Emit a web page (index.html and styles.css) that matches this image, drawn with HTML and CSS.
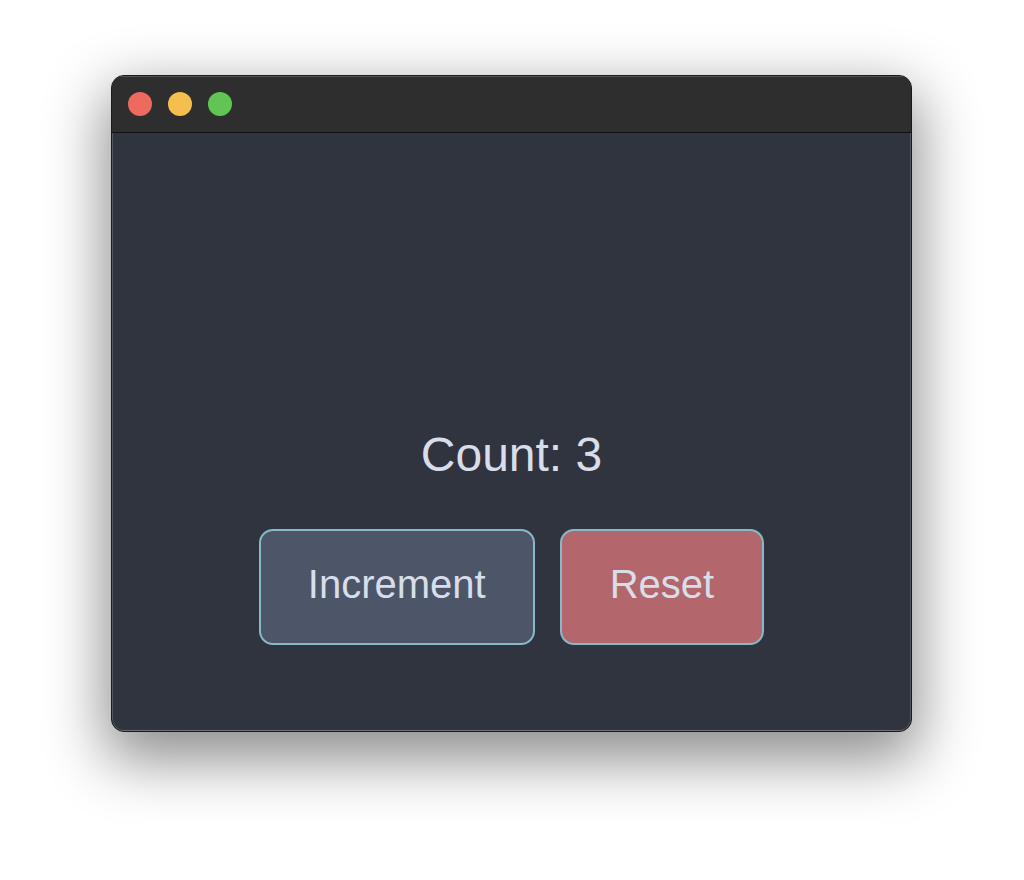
FILE: index.html
```html
<!DOCTYPE html>
<html>
<head>
<meta charset="utf-8">
<link rel="stylesheet" href="styles.css">
</head>
<body>
<div class="window">
  <div class="titlebar">
    <span class="light red"></span>
    <span class="light yellow"></span>
    <span class="light green"></span>
  </div>
  <div class="content">
    <div class="count">Count: 3</div>
    <div class="buttons">
      <button class="btn increment">Increment</button>
      <button class="btn reset">Reset</button>
    </div>
  </div>
</div>
</body>
</html>
```

FILE: styles.css
```css
html, body {
  margin: 0;
  padding: 0;
  background: #ffffff;
}
body {
  width: 1024px;
  height: 880px;
  overflow: hidden;
  font-family: "Liberation Sans", Arial, sans-serif;
}
.window {
  margin: 75px 0 0 111px;
  width: 801px;
  height: 657px;
  box-sizing: border-box;
  border: 1px solid #1a1a1a;
  border-radius: 13px;
  overflow: hidden;
  background: #2f343f;
  box-shadow: inset 0 0 0 1px rgba(255,255,255,0.18), 0 22px 60px 6px rgba(0,0,0,0.45);
  display: flex;
  flex-direction: column;
}
.titlebar {
  height: 56px;
  flex: none;
  background: #2e2e2e;
  border-bottom: 1px solid #111;
  display: flex;
  align-items: center;
  gap: 16px;
  padding-left: 16px;
  box-shadow: inset 0 1px 0 rgba(255,255,255,0.18);
}
.light {
  width: 24px;
  height: 24px;
  border-radius: 50%;
  display: block;
}
.red { background: #ed6a5e; }
.yellow { background: #f5bf4f; }
.green { background: #61c554; }
.content {
  flex: 1;
  display: flex;
  flex-direction: column;
  align-items: center;
  padding-top: 295px;
  box-shadow: inset 0 -1px 0 rgba(255,255,255,0.15);
}
.count {
  color: #d8dee9;
  font-size: 48px;
  line-height: 54px;
  height: 54px;
}
.buttons {
  display: flex;
  gap: 25px;
  margin-top: 47px;
}
.btn {
  font-family: "Liberation Sans", Arial, sans-serif;
  font-size: 40px;
  line-height: 44px;
  color: #d8dee9;
  border: 2px solid #88b9c9;
  border-radius: 14px;
  padding: 31px 47px 37px;
  margin: 0;
}
.increment { background: #4d5669; }
.reset { background: #b3676c; padding-left: 48px; padding-right: 48px; }
```
